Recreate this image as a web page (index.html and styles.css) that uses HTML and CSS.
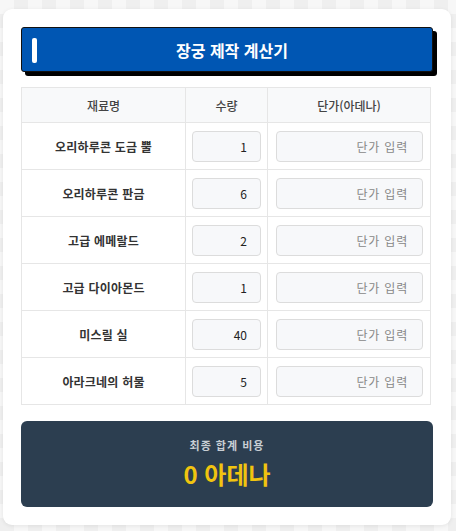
FILE: index.html
```html
<!DOCTYPE html>
<html lang="ko">
<head>
<meta charset="utf-8">
<link rel="stylesheet" href="styles.css">
</head>
<body>
<div class="card">
  <div class="title-bar">
    <span class="title-mark"></span>
    <h1 class="title">장궁 제작 계산기</h1>
  </div>
  <table class="calc">
    <thead>
      <tr><th class="c-name">재료명</th><th class="c-qty">수량</th><th class="c-price">단가(아데나)</th></tr>
    </thead>
    <tbody>
      <tr><td class="name">오리하루콘 도금 뿔</td><td><input class="qty" type="text" value="1"></td><td><input class="price" type="text" placeholder="단가 입력"></td></tr>
      <tr><td class="name">오리하루콘 판금</td><td><input class="qty" type="text" value="6"></td><td><input class="price" type="text" placeholder="단가 입력"></td></tr>
      <tr><td class="name">고급 에메랄드</td><td><input class="qty" type="text" value="2"></td><td><input class="price" type="text" placeholder="단가 입력"></td></tr>
      <tr><td class="name">고급 다이아몬드</td><td><input class="qty" type="text" value="1"></td><td><input class="price" type="text" placeholder="단가 입력"></td></tr>
      <tr><td class="name">미스릴 실</td><td><input class="qty" type="text" value="40"></td><td><input class="price" type="text" placeholder="단가 입력"></td></tr>
      <tr><td class="name">아라크네의 허물</td><td><input class="qty" type="text" value="5"></td><td><input class="price" type="text" placeholder="단가 입력"></td></tr>
    </tbody>
  </table>
  <div class="total">
    <div class="total-label">최종 합계 비용</div>
    <div class="total-value">0 아데나</div>
  </div>
</div>
</body>
</html>
```
FILE: styles.css
```css
* { box-sizing: border-box; }
html, body { margin: 0; }
body {
  font-family: "Noto Sans CJK KR", "Noto Sans", sans-serif;
  background-color: #f7f7f7;
  background-image:
    linear-gradient(45deg, #efefef 25%, transparent 25%, transparent 75%, #efefef 75%),
    linear-gradient(45deg, #efefef 25%, transparent 25%, transparent 75%, #efefef 75%);
  background-size: 28px 28px;
  background-position: 0 0, 14px 14px;
  padding: 9px 5px 6px 3px;
  color: #333;
}
.card {
  width: 448px;
  background: #fff;
  border-radius: 9px;
  box-shadow: 0 1px 4px rgba(0,0,0,0.08);
  padding: 18px 18px 18px 18px;
}
.title-bar {
  position: relative;
  height: 45px;
  background: #0056b3;
  border: 1px solid #111;
  border-radius: 3px;
  box-shadow: 4px 4px 0 #000;
  display: flex;
  align-items: center;
  justify-content: center;
  padding-left: 10px;
}
.title-mark {
  position: absolute;
  left: 10px;
  top: 10px;
  width: 5px;
  height: 25px;
  background: #fff;
  border-radius: 2px;
}
.title {
  margin: 0;
  color: #fff;
  font-size: 16px;
  font-weight: 700;
  letter-spacing: 0;
}
.calc {
  width: 410px;
  margin-top: 15px;
  border-collapse: collapse;
  table-layout: fixed;
  font-size: 12px;
}
.calc th, .calc td {
  border: 1px solid #e6e6e6;
  text-align: center;
  padding: 0;
}
.calc th {
  background: #f8f9fa;
  height: 35px;
  font-weight: 500;
  color: #444;
}
.c-name { width: 164px; }
.c-qty { width: 82px; }
.calc td { height: 47px; }
.name { font-weight: 700; color: #333; letter-spacing: 0.2px; }
.calc input {
  font-family: inherit;
  font-size: 12px;
  height: 31px;
  background: #f7f8fa;
  border: 1px solid #dcdcdc;
  border-radius: 4px;
  text-align: right;
  color: #222;
  outline: none;
  display: block;
}
.qty { width: 69px; margin-left: 6px; padding: 0 13px 0 4px; }
.price { width: 147px; margin-left: 8px; padding: 0 14px 0 4px; letter-spacing: 0.8px; }
.price::placeholder { color: #888; }
.total {
  margin-top: 16px;
  background: #2c3e50;
  border-radius: 6px;
  height: 86px;
  display: flex;
  flex-direction: column;
  align-items: center;
  justify-content: center;
}
.total-label {
  color: #c8ced4;
  font-size: 11px;
  font-weight: 700;
  letter-spacing: 1px;
  line-height: 16px;
  margin-bottom: 4px;
}
.total-value {
  color: #f1c40f;
  font-size: 24px;
  font-weight: 700;
  line-height: 34px;
}
```
